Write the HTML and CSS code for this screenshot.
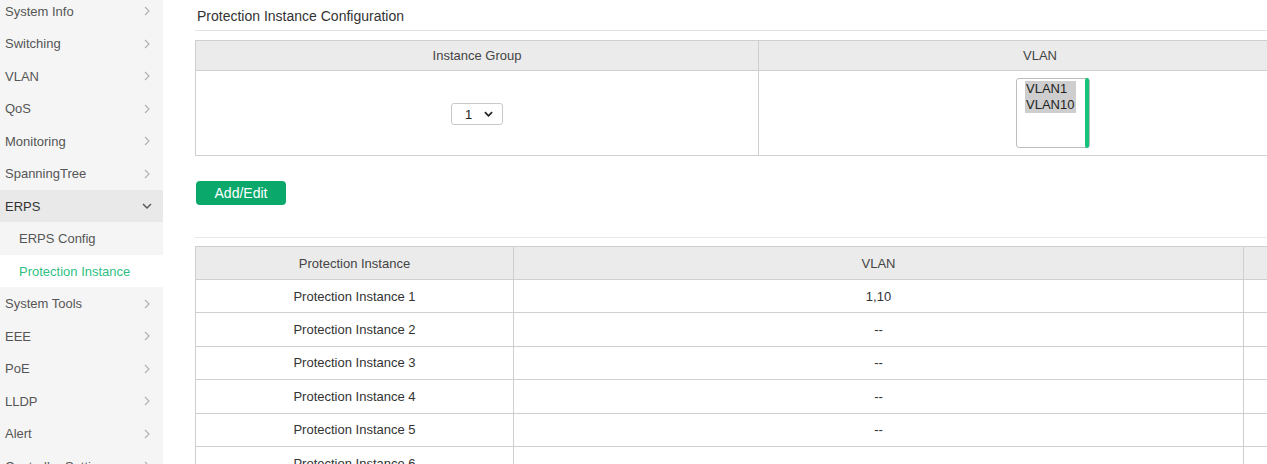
FILE: index.html
```html
<!DOCTYPE html>
<html>
<head>
<meta charset="utf-8">
<link rel="stylesheet" href="styles.css">
</head>
<body>
<nav class="sidebar">
  <div class="menu">
    <div class="item"><span>System Info</span><svg class="chev" viewBox="0 0 6 10"><polyline points="1,1 5,5 1,9"/></svg></div>
    <div class="item"><span>Switching</span><svg class="chev" viewBox="0 0 6 10"><polyline points="1,1 5,5 1,9"/></svg></div>
    <div class="item"><span>VLAN</span><svg class="chev" viewBox="0 0 6 10"><polyline points="1,1 5,5 1,9"/></svg></div>
    <div class="item"><span>QoS</span><svg class="chev" viewBox="0 0 6 10"><polyline points="1,1 5,5 1,9"/></svg></div>
    <div class="item"><span>Monitoring</span><svg class="chev" viewBox="0 0 6 10"><polyline points="1,1 5,5 1,9"/></svg></div>
    <div class="item"><span>SpanningTree</span><svg class="chev" viewBox="0 0 6 10"><polyline points="1,1 5,5 1,9"/></svg></div>
    <div class="item open"><span>ERPS</span><svg class="chev-down" viewBox="0 0 10 6"><polyline points="1,1 5,5 9,1"/></svg></div>
    <div class="item sub"><span>ERPS Config</span></div>
    <div class="item sub active"><span>Protection Instance</span></div>
    <div class="item"><span>System Tools</span><svg class="chev" viewBox="0 0 6 10"><polyline points="1,1 5,5 1,9"/></svg></div>
    <div class="item"><span>EEE</span><svg class="chev" viewBox="0 0 6 10"><polyline points="1,1 5,5 1,9"/></svg></div>
    <div class="item"><span>PoE</span><svg class="chev" viewBox="0 0 6 10"><polyline points="1,1 5,5 1,9"/></svg></div>
    <div class="item"><span>LLDP</span><svg class="chev" viewBox="0 0 6 10"><polyline points="1,1 5,5 1,9"/></svg></div>
    <div class="item"><span>Alert</span><svg class="chev" viewBox="0 0 6 10"><polyline points="1,1 5,5 1,9"/></svg></div>
    <div class="item"><span>Controller Settings</span><svg class="chev" viewBox="0 0 6 10"><polyline points="1,1 5,5 1,9"/></svg></div>
  </div>
</nav>
<main class="main">
  <h2 class="title">Protection Instance Configuration</h2>
  <table class="grid cfg">
    <colgroup><col class="c-half"><col class="c-half"></colgroup>
    <thead><tr><th>Instance Group</th><th>VLAN</th></tr></thead>
    <tbody>
      <tr class="cfg-row">
        <td>
          <div class="select"><span>1</span><svg class="sel-chev" viewBox="0 0 10 6"><polyline points="1,1 5,5 9,1"/></svg></div>
        </td>
        <td class="top">
          <div class="listbox">
            <div class="options">
              <div class="opt">VLAN1</div>
              <div class="opt">VLAN10</div>
            </div>
            <div class="scrollbar"></div>
          </div>
        </td>
      </tr>
    </tbody>
  </table>
  <button class="btn">Add/Edit</button>
  <div class="sep"></div>
  <table class="grid list">
    <colgroup><col class="c1"><col class="c2"><col class="c3"></colgroup>
    <thead><tr><th>Protection Instance</th><th>VLAN</th><th></th></tr></thead>
    <tbody>
      <tr><td>Protection Instance 1</td><td>1,10</td><td></td></tr>
      <tr><td>Protection Instance 2</td><td>--</td><td></td></tr>
      <tr><td>Protection Instance 3</td><td>--</td><td></td></tr>
      <tr><td>Protection Instance 4</td><td>--</td><td></td></tr>
      <tr><td>Protection Instance 5</td><td>--</td><td></td></tr>
      <tr><td>Protection Instance 6</td><td>--</td><td></td></tr>
    </tbody>
  </table>
</main>
</body>
</html>
```

FILE: styles.css
```css
html, body {
  margin: 0;
  padding: 0;
  height: 100%;
  overflow: hidden;
  background: #fff;
}
body {
  display: flex;
  font-family: "Liberation Sans", Arial, sans-serif;
  font-size: 13px;
  color: #333;
}
.sidebar {
  width: 163px;
  flex: none;
  background: #f5f5f5;
  height: 100%;
  overflow: hidden;
}
.menu {
  margin-top: -5.25px;
  display: flex;
  flex-direction: column;
}
.item {
  height: 32.5px;
  flex: none;
  display: flex;
  align-items: center;
  justify-content: space-between;
  padding: 0 13px 0 5px;
  color: #555;
  white-space: nowrap;
}
.item.open {
  background: #e9e9e9;
  color: #333;
}
.item.sub {
  padding-left: 19px;
}
.item.active {
  background: #fff;
  color: #2fbf83;
}
.chev {
  width: 6px;
  height: 10px;
  fill: none;
  stroke: #b0b0b0;
  stroke-width: 1.1;
}
.chev-down {
  width: 10px;
  height: 6px;
  margin-right: -2px;
  fill: none;
  stroke: #555;
  stroke-width: 1.4;
}
.main {
  flex: none;
  padding: 6px 0 0 32px;
}
.title {
  margin: 0;
  font-size: 14px;
  font-weight: normal;
  line-height: 20px;
  padding-bottom: 4px;
  padding-left: 2px;
  border-bottom: 1px solid #e3e3e3;
  color: #333;
  width: 1124px;
}
.grid {
  border-collapse: collapse;
  table-layout: fixed;
  width: 1126px;
  color: #333;
}
.grid th, .grid td {
  border: 1px solid #cfcfcf;
  text-align: center;
  font-weight: normal;
  padding: 0;
}
.grid th {
  background: #ebebeb;
  color: #444;
}
.cfg {
  margin-top: 9px;
}
.c-half { width: 563px; }
.cfg th { height: 29px; }
.cfg-row td { height: 84px; }
.cfg td.top { vertical-align: top; }
.select {
  display: inline-flex;
  align-items: center;
  justify-content: space-between;
  box-sizing: border-box;
  width: 52px;
  height: 22px;
  border: 1px solid #c9c9c9;
  border-radius: 3px;
  padding: 0 9px 0 13px;
  margin-top: 2px;
  color: #222;
  background: #fff;
}
.sel-chev {
  width: 9px;
  height: 6px;
  fill: none;
  stroke: #222;
  stroke-width: 1.9;
}
.listbox {
  display: inline-flex;
  box-sizing: border-box;
  width: 74px;
  height: 70px;
  margin-top: 7px;
  margin-left: 26px;
  border: 1px solid #bdbdbd;
  border-radius: 3px;
  padding: 1px 0 0 8px;
  text-align: left;
  background: #fff;
}
.options {
  width: 51px;
  margin-top: 1px;
}
.opt {
  background: #cecece;
  color: #222;
  line-height: 16px;
  height: 16px;
  padding-left: 1px;
}
.scrollbar {
  width: 4px;
  margin-left: auto;
  margin-top: -2px;
  margin-bottom: -1px;
  margin-right: 0;
  background: #17c27a;
  border-radius: 2px;
}
.btn {
  display: block;
  margin: 25px 0 0 1px;
  width: 90px;
  height: 24px;
  border: none;
  border-radius: 4px;
  background: #0aa86b;
  color: #fff;
  font-family: "Liberation Sans", Arial, sans-serif;
  font-size: 14px;
  padding: 0;
}
.sep {
  margin-top: 32px;
  border-top: 1px solid #e8e8e8;
  width: 1126px;
}
.list {
  margin-top: 8px;
}
.c1 { width: 318px; }
.c2 { width: 730px; }
.c3 { width: 78px; }
.list th { height: 32px; }
.list td { height: 32.4px; }
```
